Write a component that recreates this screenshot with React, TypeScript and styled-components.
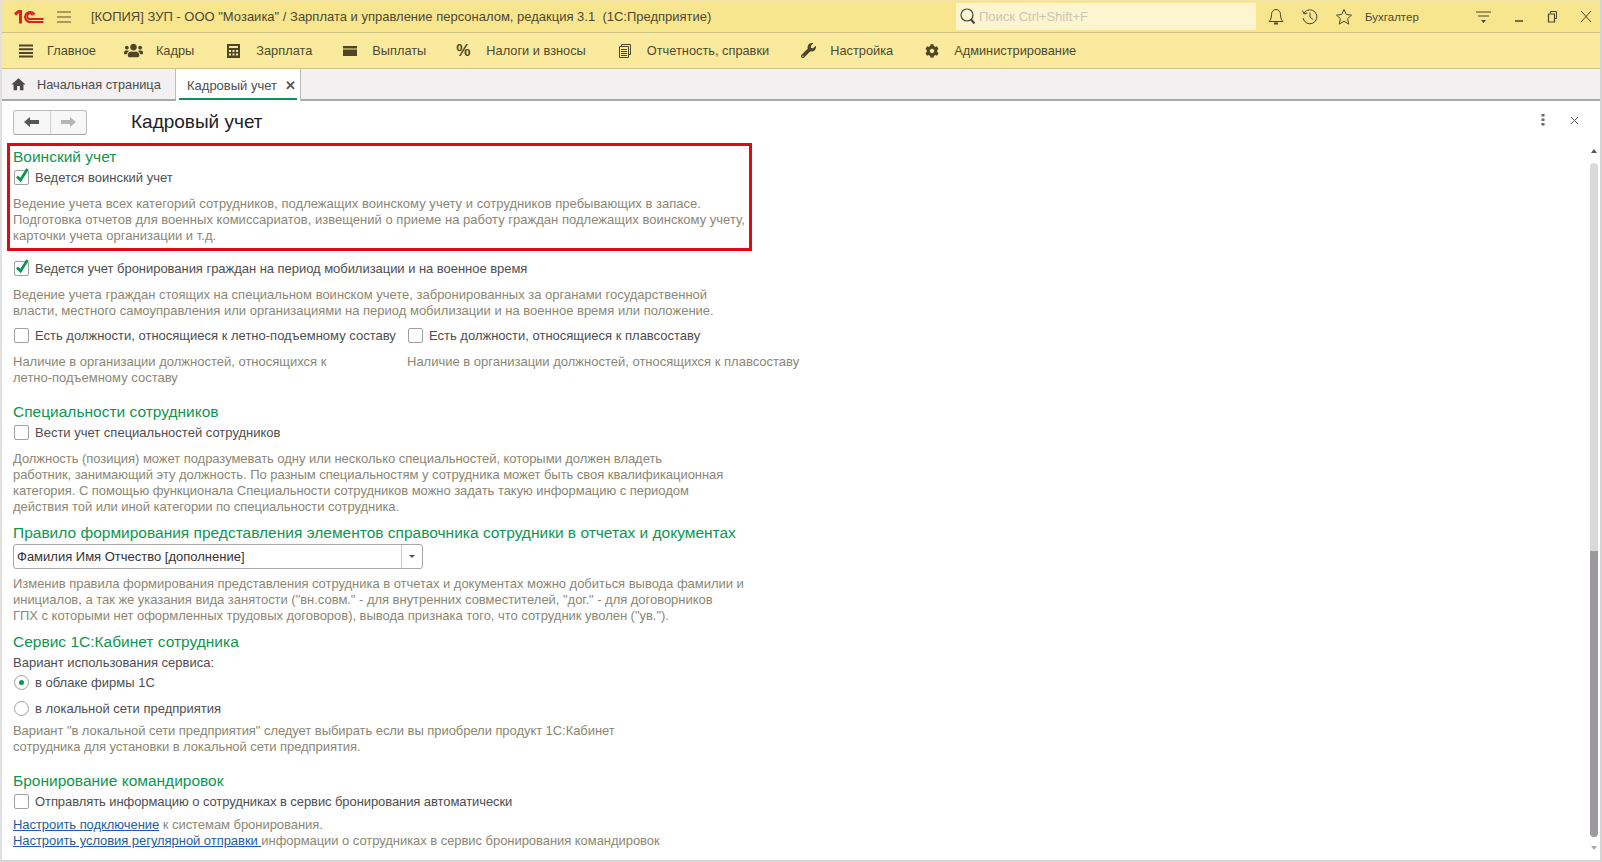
import React from 'react';
import styled, { createGlobalStyle } from 'styled-components';
import { FaUsers, FaWrench, FaCog } from 'react-icons/fa';
import { MdHome } from 'react-icons/md';

const Global = createGlobalStyle`
  html, body { margin: 0; padding: 0; background: #fff; }
  body { font-family: "Liberation Sans", Arial, sans-serif; font-size: 13px; color: #4b4b4b; }
  * { box-sizing: border-box; }
`;

const Page = styled.div`
  width: 1602px; height: 862px; overflow: hidden; display: flex; flex-direction: column;
  border-right: 2px solid #d4d4d4; border-bottom: 2px solid #d4d4d4; border-left: 2px solid #e0e0e0;
`;
const TitleBar = styled.div`
  height: 33px; flex: none; margin-left: -2px; margin-right: -2px; display: flex; align-items: center; padding-bottom: 1px;
  background: #f8e68f; border-top: 2px solid #f3e3a8; border-bottom: 1px solid #cfc184; color: #4f4a2e;
`;
const Logo = styled.svg`width: 30px; height: 16px; margin-left: 14px; flex: none;`;
const Burger = styled.svg`width: 14px; height: 12px; margin-left: 13px; flex: none;`;
const AppTitle = styled.div`
  margin-left: 20px; font-size: 13px; width: 867px; white-space: pre; color: #4d4830;
`;
const Search = styled.div`
  width: 300px; height: 27px; margin-left: -2px; background: #fdf5cf; display: flex; align-items: center;
  font-size: 13px; color: #c9c6b4; padding-left: 4px; gap: 3px;
`;
const TopIcons = styled.div`display: flex; align-items: center; margin-left: 11px;`;
const TopIcon = styled.svg<{ $gap?: number }>`width: 18px; height: 18px; margin-right: ${p => p.$gap ?? 16}px; flex: none;`;
const Role = styled.span`font-size: 11.500px; width: 111px; color: #4d4830;`;
const WinIcon = styled.svg<{ $w: number }>`width: 16px; height: 18px; margin-right: ${p => p.$w}px; flex: none;`;

const MenuBar = styled.div`
  height: 36px; flex: none; margin-left: -2px; margin-right: -2px; display: flex; align-items: center;
  background: #f9ea9e; border-bottom: 1px solid #cfc184; padding-left: 18px;
`;
const MenuItem = styled.div<{ $gap: number }>`
  display: flex; align-items: center; font-size: 12.800px; color: #4f4a2e; margin-right: ${p => p.$gap}px; white-space: nowrap;
  svg { flex: none; color: #4f4628; }
`;
const MenuIcon = styled.span<{ $w: number }>`
  display: flex; align-items: center; justify-content: flex-start; width: ${p => p.$w}px; font-weight: 700; font-size: 16px; color: #4f4628;
`;

const TabBar = styled.div`
  height: 32px; flex: none; margin-left: -2px; margin-right: -2px; display: flex; background: #f2f0f1; border-bottom: 2px solid #a9a9ab;
`;
const HomeTab = styled.div`
  width: 176px; display: flex; align-items: center; padding-left: 10px; gap: 10px; font-size: 12.800px; color: #4d4d4d;
  border-right: 1px solid #bdbdbd;
`;
const ActiveTab = styled.div`
  width: 125px; height: 32px; position: relative; display: flex; align-items: center; padding-left: 11px; gap: 8px; font-size: 13px; color: #4d4d4d;
  background: #fff; border-right: 1px solid #bdbdbd;
  &::after { content: ""; position: absolute; left: 3px; right: 3px; bottom: 1px; height: 2px; background: #0f9255; }
`;
const TabClose = styled.span`font-size: 13px; font-weight: 700; color: #555; line-height: 1;`;

const Body = styled.div`flex: 1; display: flex; min-height: 0;`;
const Content = styled.div`flex: 1; min-width: 0; padding: 7px 0 0 11px;`;
const Head = styled.div`display: flex; align-items: center; height: 28px;`;
const NavGroup = styled.div`
  width: 74px; height: 25px; display: flex; border: 1px solid #bcbcbc; border-radius: 3px; background: #f7f7f7; border-bottom-color: #a5a5a5;
`;
const NavBtn = styled.div<{ $sep?: boolean }>`
  flex: 1; display: flex; align-items: center; justify-content: center; ${p => p.$sep ? 'border-right: 1px solid #d4d4d4;' : ''}
`;
const PageTitle = styled.h1`margin: 0 0 0 44px; font-size: 19px; font-weight: 400; color: #222; letter-spacing: 0;`;

const Marked = styled.div`
  width: 745px; height: 108px; margin: 7px 0 0 -6px; padding: 2px 0 0 3px; border: 3px solid #e30613;
`;
const Heading = styled.div<{ $mt?: number }>`
  font-size: 15.500px; line-height: 18px; color: #0d9651; white-space: nowrap; margin-top: ${p => p.$mt ?? 0}px;
`;
const CheckRow = styled.label<{ $mt?: number; $ls?: number }>`
  display: flex; align-items: center; height: 20px; margin-top: ${p => p.$mt ?? 0}px; font-size: 13px; color: #4e4e4e; white-space: nowrap;
  letter-spacing: ${p => p.$ls ?? 0}px;
`;
const Box = styled.span`
  position: relative; width: 15px; height: 15px; margin-right: 6px; margin-left: 1px; flex: none; border: 1px solid #9f9f9f; border-radius: 2px; background: #fff;
  svg { position: absolute; left: 0px; top: -4px; }
`;
const Radio = styled.span<{ $on?: boolean }>`
  width: 15px; height: 15px; margin-right: 6px; margin-left: 1px; flex: none; border: 1px solid #9f9f9f; border-radius: 50%; background: #fff;
  display: flex; align-items: center; justify-content: center;
  &::after { content: ""; width: 5px; height: 5px; border-radius: 50%; background: ${p => p.$on ? '#0d9651' : 'transparent'}; }
`;
const Desc = styled.div<{ $mt?: number; $ls?: number }>`
  font-size: 13px; line-height: 16px; color: #8b8774; margin-top: ${p => p.$mt ?? 0}px; white-space: pre-line;
  letter-spacing: ${p => p.$ls ?? 0}px;
`;
const Columns = styled.div`display: grid; grid-template-columns: 394px auto; width: 800px;`;
const Select = styled.div`
  width: 410px; height: 25px; margin-top: 2px; display: flex; border: 1px solid #a7a7a7; border-radius: 3px; background: #fff; font-size: 13px; color: #333;
`;
const SelectValue = styled.div`flex: 1; display: flex; align-items: center; padding-left: 3px; border-right: 1px solid #c9c9c9;`;
const SelectArrow = styled.div`
  width: 20px; display: flex; align-items: center; justify-content: center;
  &::after { content: ""; border: 3px solid transparent; border-top: 3px solid #555; margin-top: 3px; }
`;
const Plain = styled.div<{ $mt?: number }>`font-size: 13px; line-height: 16px; margin-top: ${p => p.$mt ?? 0}px; color: #4e4e4e;`;
const Link = styled.a`color: #1d5ca8; text-decoration: underline;`;

const Scroll = styled.div`
  width: 38px; flex: none; position: relative; display: flex; flex-direction: column; align-items: flex-end; padding-right: 2px;
`;
const PanelIcons = styled.div`
  position: absolute; right: 21px; top: 13px; display: flex; align-items: center; gap: 25px;
`;
const Track = styled.div`
  width: 8px; margin-top: 62px; height: 674px; border-radius: 4px; background: linear-gradient(#d9d8da 0 57.6%, #9c9a9d 57.6% 100%);
`;
const ArrowUp = styled.div`
  position: absolute; right: 3px; top: 45px; border: 3.500px solid transparent; border-bottom: 4px solid #555;
`;
const ArrowDown = styled.div`
  position: absolute; right: 3px; top: 745px; border: 3.500px solid transparent; border-top: 4px solid #aaa;
`;

const Check = ({ on, children, mt, ls }: { on?: boolean; children: React.ReactNode; mt?: number; ls?: number }) => (
  <CheckRow $mt={mt} $ls={ls}>
    <Box>
      {on && (
        <svg width="15" height="17" viewBox="0 0 15 17" fill="none">
          <path d="M2 9.500l3.500 3.500 7-11" stroke="#0d9651" strokeWidth="2.800" />
        </svg>
      )}
    </Box>
    {children}
  </CheckRow>
);

const MENU: [React.ReactNode, number, string, number][] = [
  [<svg width="16" height="14" viewBox="0 0 16 14"><path d="M1 1.500h14M1 5.200h14M1 8.900h14M1 12.600h14" stroke="#4f4628" strokeWidth="2" /></svg>, 29, 'Главное', 28],
  [<FaUsers size={19} />, 32, 'Кадры', 33],
  [<svg width="13" height="14" viewBox="0 0 13 14"><path fill="#4f4628" fillRule="evenodd" d="M0 0h13v14H0zM2 2v2h9V2zM2 6v2h2V6zm3.500 0v2h2V6zM9 6v2h2V6zM2 9.500v2h2v-2zm3.500 0v2h2v-2zm3.500 0v2h2v-2z" /></svg>, 29, 'Зарплата', 31],
  [<svg width="14" height="10" viewBox="0 0 14 10"><path fill="#4f4628" d="M0 0h14v2.500H0zM0 3.500h14V10H0z" /></svg>, 29, 'Выплаты', 30],
  [<span>%</span>, 30, 'Налоги и взносы', 32],
  [<svg width="13" height="14" viewBox="0 0 13 14" fill="none" stroke="#4f4628"><path d="M3.500 2.500V.5h9v10h-2M1.500 2.500h9v11h-9zM3 5.500h6M3 7.500h6M3 9.500h6M3 11.500h6" /></svg>, 29, 'Отчетность, справки', 32],
  [<FaWrench size={15} />, 29, 'Настройка', 32],
  [<FaCog size={14} />, 29, 'Администрирование', 0],
];

export default function App() {
  return (
    <Page>
      <Global />
      <TitleBar>
        <Logo viewBox="0 0 30 16">
          <path d="M1 5.500 L4.500 2.500 H6.500 V14.500" fill="none" stroke="#d8231f" strokeWidth="3" />
          <path d="M20.500 5.500 A5 5 0 1 0 16 13 H29.500" fill="none" stroke="#d8231f" strokeWidth="2.200" />
          <path d="M18.500 6.500 A2.700 2.700 0 1 0 16 10 H29.500" fill="none" stroke="#d8231f" strokeWidth="1.800" />
        </Logo>
        <Burger viewBox="0 0 14 12"><path d="M0 1h14M0 6h14M0 11h14" stroke="#5a5030" strokeWidth="1" /></Burger>
        <AppTitle>[КОПИЯ] ЗУП - ООО "Мозаика" / Зарплата и управление персоналом, редакция 3.1  (1С:Предприятие)</AppTitle>
        <Search>
          <svg width="16" height="17" viewBox="0 0 16 17" fill="none" stroke="#444"><circle cx="7" cy="7" r="6" strokeWidth="1.200" /><path d="M11 11.500l3.500 4" strokeWidth="2" /></svg>
          Поиск Ctrl+Shift+F
        </Search>
        <TopIcons>
          <TopIcon viewBox="0 0 18 18" fill="none" stroke="#4a4632"><path d="M9 1.500c-3 0-4.500 2.500-4.500 5 0 4-1 5.500-2.500 7h14c-1.500-1.500-2.500-3-2.500-7 0-2.500-1.500-5-4.500-5z" /><path d="M7 15.500h4" strokeWidth="2" /></TopIcon>
          <TopIcon viewBox="0 0 18 18" fill="none" stroke="#4a4632"><path d="M3 5a7 7 0 1 1-1 5" /><path d="M1.500 2.500L3 6l3.500-1M9 4.500V9l3 2.500" /></TopIcon>
          <TopIcon $gap={12} viewBox="0 0 18 18" fill="none" stroke="#4a4632"><path d="M9 1.500l2.300 5 5.200.6-3.900 3.600 1.100 5.400L9 13.300 4.300 16.100l1.100-5.400L1.500 7.100l5.200-.6z" /></TopIcon>
          <Role>Бухгалтер</Role>
          <WinIcon $w={20} viewBox="0 0 16 18" fill="none" stroke="#4a4632"><path d="M0 4h15M2 8h11" /><path d="M5 12h5l-2.500 3z" fill="#4a4632" stroke="none" /></WinIcon>
          <WinIcon $w={17} viewBox="0 0 16 18" fill="none" stroke="#4a4632"><path d="M3 13h8" strokeWidth="1.500" /></WinIcon>
          <WinIcon $w={17} viewBox="0 0 16 18" fill="none" stroke="#4a4632"><path d="M5.500 5.500v-2h6v7h-2" /><path d="M3.500 6h6v8h-6z" strokeWidth="1.200" /></WinIcon>
          <WinIcon $w={0} viewBox="0 0 16 18" fill="none" stroke="#4a4632"><path d="M3 3l10 11M13 3L3 14" /></WinIcon>
        </TopIcons>
      </TitleBar>
      <MenuBar>
        {MENU.map(([icon, w, label, gap]) => (
          <MenuItem key={label} $gap={gap}><MenuIcon $w={w}>{icon}</MenuIcon>{label}</MenuItem>
        ))}
      </MenuBar>
      <TabBar>
        <HomeTab><MdHome size={17} color="#4a4a4a" />Начальная страница</HomeTab>
        <ActiveTab>Кадровый учет<TabClose>✕</TabClose></ActiveTab>
      </TabBar>
      <Body>
        <Content>
          <Head>
            <NavGroup>
              <NavBtn $sep><svg width="15" height="10" viewBox="0 0 15 10"><path fill="#555" d="M0 5l6-5v3h9v4H6v3z" /></svg></NavBtn>
              <NavBtn><svg width="15" height="10" viewBox="0 0 15 10"><path fill="#b5b5b5" d="M15 5L9 0v3H0v4h9v3z" /></svg></NavBtn>
            </NavGroup>
            <PageTitle>Кадровый учет</PageTitle>
          </Head>
          <Marked>
            <Heading>Воинский учет</Heading>
            <Check on mt={1}>Ведется воинский учет</Check>
            <Desc $mt={9} $ls={0.02}>{'Ведение учета всех категорий сотрудников, подлежащих воинскому учету и сотрудников пребывающих в запасе.\nПодготовка отчетов для военных комиссариатов, извещений о приеме на работу граждан подлежащих воинскому учету,\nкарточки учета организации и т.д.'}</Desc>
          </Marked>
          <Check on mt={7} ls={-0.04}>Ведется учет бронирования граждан на период мобилизации и на военное время</Check>
          <Desc $mt={9}>{'Ведение учета граждан стоящих на специальном воинском учете, забронированных за органами государственной\nвласти, местного самоуправления или организациями на период мобилизации и на военное время или положение.'}</Desc>
          <Columns>
            <Check mt={6}>Есть должности, относящиеся к летно-подъемному составу</Check>
            <Check mt={6}>Есть должности, относящиеся к плавсоставу</Check>
            <Desc $mt={9}>{'Наличие в организации должностей, относящихся к\nлетно-подъемному составу'}</Desc>
            <Desc $mt={9}>Наличие в организации должностей, относящихся к плавсоставу</Desc>
          </Columns>
          <Heading $mt={17}>Специальности сотрудников</Heading>
          <Check mt={1}>Вести учет специальностей сотрудников</Check>
          <Desc $mt={9} $ls={-0.045}>{'Должность (позиция) может подразумевать одну или несколько специальностей, которыми должен владеть\nработник, занимающий эту должность. По разным специальностям у сотрудника может быть своя квалификационная\nкатегория. С помощью функционала Специальности сотрудников можно задать такую информацию с периодом\nдействия той или иной категории по специальности сотрудника.'}</Desc>
          <Heading $mt={9}>Правило формирования представления элементов справочника сотрудники в отчетах и документах</Heading>
          <Select><SelectValue>Фамилия Имя Отчество [дополнение]</SelectValue><SelectArrow /></Select>
          <Desc $mt={7} $ls={-0.03}>{'Изменив правила формирования представления сотрудника в отчетах и документах можно добиться вывода фамилии и\nинициалов, а так же указания вида занятости ("вн.совм." - для внутренних совместителей, "дог." - для договорников\nГПХ с которыми нет оформленных трудовых договоров), вывода признака того, что сотрудник уволен ("ув.").'}</Desc>
          <Heading $mt={9}>Сервис 1С:Кабинет сотрудника</Heading>
          <Plain $mt={4}>Вариант использования сервиса:</Plain>
          <CheckRow $mt={1}><Radio $on />в облаке фирмы 1С</CheckRow>
          <CheckRow $mt={6}><Radio />в локальной сети предприятия</CheckRow>
          <Desc $mt={5} $ls={-0.06}>{'Вариант "в локальной сети предприятия" следует выбирать если вы приобрели продукт 1С:Кабинет\nсотрудника для установки в локальной сети предприятия.'}</Desc>
          <Heading $mt={17}>Бронирование командировок</Heading>
          <Check mt={1} ls={-0.08}>Отправлять информацию о сотрудниках в сервис бронирования автоматически</Check>
          <Desc $mt={6} $ls={-0.05}><Link>Настроить подключение</Link> к системам бронирования.{'\n'}<Link>Настроить условия регулярной отправки </Link>информации о сотрудниках в сервис бронирования командировок</Desc>
        </Content>
        <Scroll>
          <PanelIcons>
            <svg width="4" height="12" viewBox="0 0 4 12"><path fill="#666" d="M0.500 0h3v2.500h-3zM0.500 4.500h3V7h-3zM0.500 9h3v2.500h-3z" /></svg>
            <svg width="9" height="9" viewBox="0 0 9 9" fill="none" stroke="#555"><path d="M1 1l7 7M8 1L1 8" /></svg>
          </PanelIcons>
          <ArrowUp />
          <Track />
          <ArrowDown />
        </Scroll>
      </Body>
    </Page>
  );
}
